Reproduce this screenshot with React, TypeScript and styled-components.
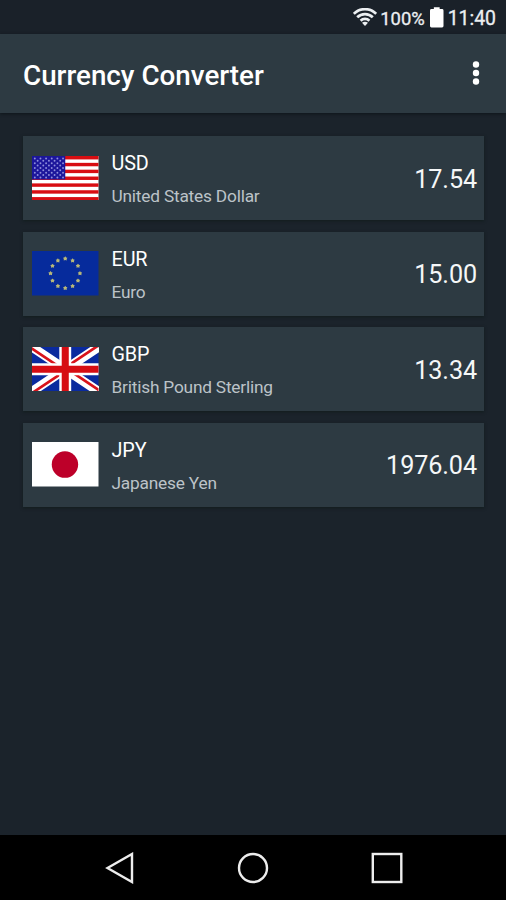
import React from "react";
import styled, { createGlobalStyle } from "styled-components";

const GlobalStyle = createGlobalStyle`
  *, *::before, *::after { box-sizing: border-box; }
  body { margin: 0; background: #1b232b; }
`;

const Screen = styled.div`
  display: flex;
  flex-direction: column;
  width: 506px;
  height: 900px;
  overflow: hidden;
  background: #1b232b;
  color: #fff;
  font-family: Roboto, "Liberation Sans", sans-serif;
`;

const StatusBar = styled.div`
  display: flex;
  justify-content: flex-end;
  align-items: center;
  height: 34px;
  padding: 3px 10px 0 0;
  background: #1a2129;
  color: #eceff1;
`;

const WifiIcon = styled.svg`
  width: 24px;
  height: 18px;
  margin: -4px 3px 0 0;
`;

const BatteryIcon = styled.svg`
  width: 13.5px;
  height: 20.5px;
  margin: -2px 4px 0 5.5px;
`;

const StatusText = styled.span<{ $size: number }>`
  font-size: ${(p) => p.$size}px;
  line-height: 24px;
  -webkit-text-stroke: 0.3px #eceff1;
`;

const AppBar = styled.header`
  display: flex;
  align-items: center;
  justify-content: space-between;
  flex: none;
  height: 79px;
  padding: 4px 26px 0 23px;
  background: #2d3a42;
  box-shadow: 0 1px 3px rgba(8, 16, 18, 0.7);
`;

const Title = styled.h1`
  margin: 0;
  font-size: 27.8px;
  line-height: 34px;
  font-weight: 500;
`;

const MenuIcon = styled.svg`
  width: 8px;
  height: 26px;
  margin-top: -5px;
`;

const List = styled.main`
  display: flex;
  flex: 1;
  flex-direction: column;
  gap: 11.5px;
  padding: 23px 22px 0 23px;
`;

const Card = styled.article`
  display: flex;
  align-items: center;
  height: 84px;
  padding: 0 7px 0 9px;
  background: #2d3a42;
  box-shadow: 0 1px 3px rgba(12, 26, 22, 0.65);
`;

const Flag = styled.svg`
  flex: none;
  width: 66.5px;
  height: 44.5px;
  margin-right: 13px;
`;

const Labels = styled.div`
  display: flex;
  flex: 1;
  flex-direction: column;
  gap: 8px;
  padding-top: 4px;
`;

const Code = styled.span`
  font-size: 19.8px;
  line-height: 24px;
  letter-spacing: -0.1px;
`;

const Name = styled.span`
  font-size: 17.3px;
  line-height: 24px;
  letter-spacing: -0.2px;
  color: #bcc3c8;
`;

const Amount = styled.span`
  font-size: 25.2px;
  line-height: 32px;
  padding-top: 3px;
  letter-spacing: -0.1px;
  color: #f5f7f8;
`;

const NavBar = styled.nav`
  display: flex;
  align-items: center;
  justify-content: space-between;
  flex: none;
  height: 65px;
  padding: 1px 103px 0 104px;
  background: #000;
`;

const NavIcon = styled.svg<{ $shift?: number }>`
  width: 32px;
  height: 32px;
  margin-left: ${(p) => p.$shift ?? 0}px;
  fill: none;
  stroke: #ededed;
  stroke-width: 2.4;
`;

const stars = Array.from({ length: 9 }, (_, row) =>
  Array.from({ length: row % 2 ? 5 : 6 }, (_, col) => ({
    x: 2.8 + (row % 2 ? 2.8 : 0) + col * 5.6,
    y: 2.4 + row * 2.35,
  })),
).flat();

const UsFlag = () => (
  <Flag viewBox="0 0 66 44" preserveAspectRatio="none">
    <rect width="66" height="44" fill="#fff" />
    {[0, 2, 4, 6, 8, 10, 12].map((i) => (
      <rect key={i} y={(i * 44) / 13} width="66" height={44 / 13} fill="#d80d12" />
    ))}
    <rect width="33" height="23.2" fill="#1c169b" />
    {stars.map((s) => (
      <circle key={`${s.x}-${s.y}`} cx={s.x} cy={s.y} r="0.95" fill="#8f8fdc" />
    ))}
  </Flag>
);

const EuFlag = () => (
  <Flag viewBox="0 0 66 44" preserveAspectRatio="none">
    <rect width="66" height="44" fill="#062b9c" />
    {Array.from({ length: 12 }, (_, i) => {
      const a = (i * Math.PI) / 6;
      return (
        <path
          key={i}
          transform={`translate(${33 + 14.6 * Math.sin(a)} ${22 - 14.6 * Math.cos(a)})`}
          d="M0-2.2 .9-1 2.2-.7 1.4 .4 1.5 1.9 0 1.4-1.5 1.9-1.4 .4-2.2-.7-.9-1Z"
          fill="#b9b878"
        />
      );
    })}
  </Flag>
);

const UkFlag = () => (
  <Flag viewBox="0 0 66 44" preserveAspectRatio="none">
    <rect width="66" height="44" fill="#0a2a9e" />
    <path d="M0 0 66 44M66 0 0 44" stroke="#fff" strokeWidth="9" />
    <path
      d="M0 0 33 22 28.2 22 0 3.2ZM66 0 33 22 28.2 22 61.2 0ZM66 44 33 22 37.8 22 66 40.8ZM0 44 33 22 37.8 22 4.8 44Z"
      fill="#d8131b"
    />
    <path d="M33 0V44M0 22H66" stroke="#fff" strokeWidth="11.8" />
    <path d="M33 0V44M0 22H66" stroke="#d60d13" strokeWidth="7" />
  </Flag>
);

const JpFlag = () => (
  <Flag viewBox="0 0 66 44" preserveAspectRatio="none">
    <rect width="66" height="44" fill="#fff" />
    <circle cx="32.7" cy="22.3" r="13.1" fill="#bd0029" />
  </Flag>
);

const currencies = [
  { code: "USD", name: "United States Dollar", amount: "17.54", flag: <UsFlag /> },
  { code: "EUR", name: "Euro", amount: "15.00", flag: <EuFlag /> },
  { code: "GBP", name: "British Pound Sterling", amount: "13.34", flag: <UkFlag /> },
  { code: "JPY", name: "Japanese Yen", amount: "1976.04", flag: <JpFlag /> },
];

export default function App() {
  return (
    <>
      <GlobalStyle />
      <Screen>
        <StatusBar>
          <WifiIcon viewBox="0 0 24 18" fill="none" stroke="#eceff1" strokeWidth="2.7">
            <path d="M.8 5.8C7-.4 17-.4 23.2 5.8M4.2 9.3C8.6 5 15.4 5 19.8 9.3M7.6 12.7C10 10.3 14 10.3 16.4 12.7" />
            <path d="M12 18 9 14.8Q12 12.6 15 14.8Z" fill="#eceff1" stroke="none" />
          </WifiIcon>
          <StatusText $size={18.4}>100%</StatusText>
          <BatteryIcon viewBox="0 0 14 21" fill="#fff">
            <path d="M4 0H10V2H12.5Q14 2 14 3.5V19.5Q14 21 12.5 21H1.5Q0 21 0 19.5V3.5Q0 2 1.5 2H4Z" />
          </BatteryIcon>
          <StatusText $size={19.4}>11:40</StatusText>
        </StatusBar>
        <AppBar>
          <Title>Currency Converter</Title>
          <MenuIcon viewBox="0 0 8 26" fill="#fff">
            <circle cx="4" cy="4.5" r="3.2" />
            <circle cx="4" cy="13" r="3.2" />
            <circle cx="4" cy="21.5" r="3.2" />
          </MenuIcon>
        </AppBar>
        <List>
          {currencies.map((c) => (
            <Card key={c.code}>
              {c.flag}
              <Labels>
                <Code>{c.code}</Code>
                <Name>{c.name}</Name>
              </Labels>
              <Amount>{c.amount}</Amount>
            </Card>
          ))}
        </List>
        <NavBar>
          <NavIcon viewBox="0 0 32 32">
            <path d="M3.5 16 28 2V30Z" />
          </NavIcon>
          <NavIcon viewBox="0 0 32 32" $shift={-2}>
            <circle cx="16" cy="16" r="14" />
          </NavIcon>
          <NavIcon viewBox="0 0 32 32">
            <rect x="1.8" y="2" width="28.5" height="28" />
          </NavIcon>
        </NavBar>
      </Screen>
    </>
  );
}
